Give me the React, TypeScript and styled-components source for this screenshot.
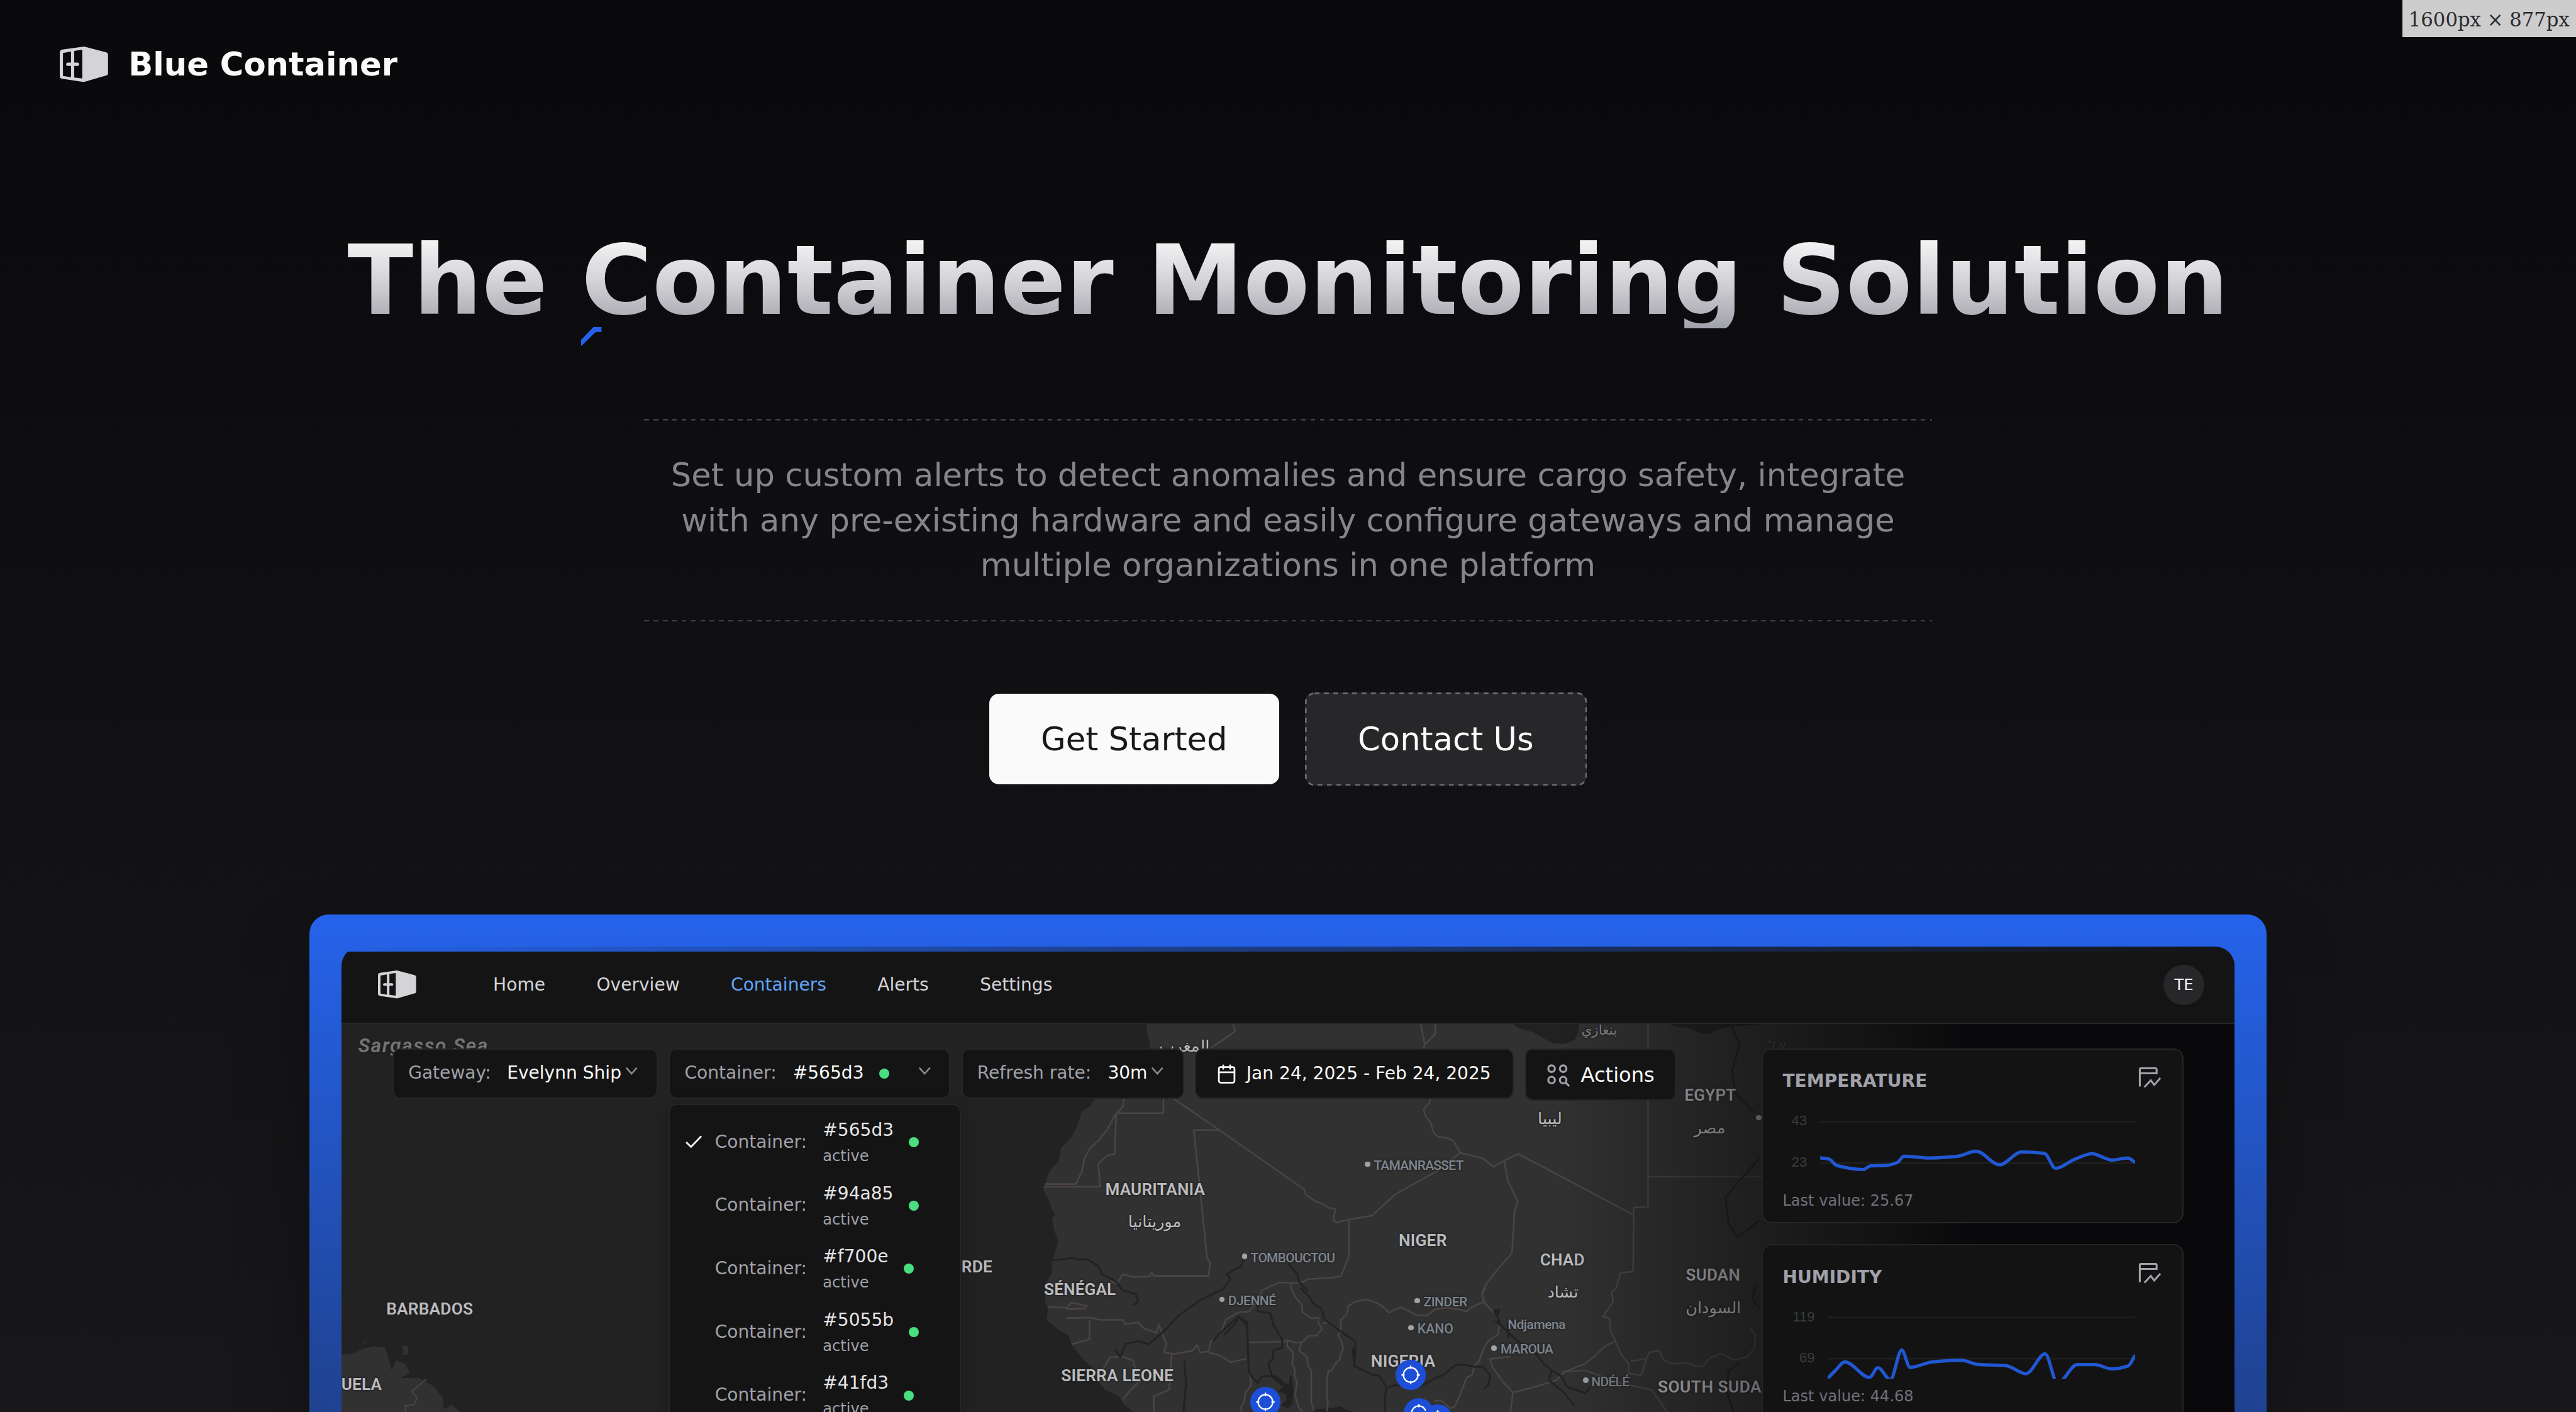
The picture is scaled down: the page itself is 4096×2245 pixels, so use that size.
import React from 'react';
import styled, { createGlobalStyle } from 'styled-components';
import { Calendar } from 'lucide-react';

/* One rem is one layout unit: the page is 1600 units wide. */
const GlobalStyle = createGlobalStyle`
  html { font-size: 2.56px; }
  body { margin: 0; background: #09090b; overflow: hidden; }
  * { box-sizing: border-box; }
`;

const Page = styled.div`
  position: relative;
  width: 1600rem;
  height: 877rem;
  overflow: hidden;
  display: flex;
  flex-direction: column;
  align-items: center;
  background: linear-gradient(180deg, #09090b, #18181b);
  color: #fafafa;
  font-family: 'DejaVu Sans', sans-serif;
`;

const Header = styled.header`
  align-self: stretch;
  height: 80rem;
  display: flex;
  align-items: center;
  gap: 12.8rem;
  padding-left: 37rem;
  flex-shrink: 0;
`;

const Brand = styled.span`
  font-size: 20rem;
  line-height: 28rem;
  font-weight: 700;
`;

const LogoSvg = styled.svg<{ $w: number }>`
  display: block;
  width: ${(p) => p.$w}rem;
  height: ${(p) => (p.$w * 22) / 30}rem;
  color: #d4d4d8;
  flex-shrink: 0;
`;

const SizeBadge = styled.div`
  position: absolute;
  top: 0;
  right: 0;
  width: 108rem;
  height: 23rem;
  padding: 1rem 4rem 0;
  display: flex;
  align-items: center;
  background: #cdcdcd;
  color: #2b2b2f;
  font-family: 'DejaVu Serif', serif;
  font-size: 12rem;
  white-space: nowrap;
`;

const Title = styled.h1`
  margin: 64rem 0 0;
  height: 60rem;
  font-size: 60rem;
  line-height: 60rem;
  font-weight: 700;
  white-space: nowrap;
  color: transparent;
  background: linear-gradient(180deg, #fafafa, #d4d4d8, #a1a1aa);
  background-clip: text;
  -webkit-background-clip: text;
  flex-shrink: 0;
`;

const Spark = styled.svg`
  position: absolute;
  left: 361rem;
  top: 203rem;
  width: 12.67rem;
  height: 11.9rem;
`;

const Lead = styled.p`
  margin: 56rem 0 0;
  width: 800rem;
  height: 126rem;
  padding-top: 0.6rem;
  display: flex;
  flex-direction: column;
  justify-content: center;
  align-items: center;
  background:
    repeating-linear-gradient(90deg, #3f3f46 0 3rem, transparent 3rem 5.83rem) 0 0 / 100% 1rem no-repeat,
    repeating-linear-gradient(90deg, #3f3f46 0 3rem, transparent 3rem 5.83rem) 0 100% / 100% 1rem no-repeat;
  font-size: 20rem;
  line-height: 28rem;
  color: #85858a;
  white-space: nowrap;
  flex-shrink: 0;
`;

const Actions = styled.div`
  margin-top: 44rem;
  height: 58rem;
  display: flex;
  align-items: center;
  gap: 16rem;
  flex-shrink: 0;
`;

const Button = styled.button<{ $primary?: boolean }>`
  position: relative;
  margin: 0;
  padding: 0.5rem 0 0;
  width: ${(p) => (p.$primary ? 180 : 175.2)}rem;
  height: ${(p) => (p.$primary ? 56 : 58)}rem;
  border: 0;
  border-radius: 6rem;
  background: ${(p) => (p.$primary ? '#fafafa' : '#27272a')};
  color: ${(p) => (p.$primary ? '#18181b' : '#fafafa')};
  font: 20rem/28rem 'DejaVu Sans', sans-serif;
`;

const DashedEdge = styled.svg`
  position: absolute;
  inset: 0;
  width: 100%;
  height: 100%;
  fill: none;
  stroke: #71717a;
`;

const Frame = styled.section`
  margin-top: 80rem;
  width: 1216rem;
  height: 710rem;
  padding: 20rem;
  border-radius: 12rem;
  background: linear-gradient(180deg, #2563eb, #18181b);
  box-shadow: 0 25rem 50rem -12rem rgba(0, 0, 0, 0.5);
  flex-shrink: 0;
`;

const AppShell = styled.div`
  height: 670rem;
  border-radius: 12rem;
  overflow: hidden;
  background: linear-gradient(90deg, transparent, #141414);
`;

const NavBar = styled.nav`
  height: 48rem;
  padding: 0 19rem 0 22.8rem;
  display: flex;
  align-items: center;
  border-bottom: 1rem solid #272727;
  background: linear-gradient(#141414, #141414) 0 3.2rem no-repeat;
`;

const NavLinks = styled.div`
  display: flex;
  gap: 31.8rem;
  margin-left: 47.8rem;
  flex: 1;
`;

const NavLink = styled.a<{ $active?: boolean }>`
  font-size: 10.97rem;
  line-height: 16rem;
  padding-top: 0.4rem;
  color: ${(p) => (p.$active ? '#60a5fa' : '#d4d4d8')};
`;

const Avatar = styled.div`
  width: 25.1rem;
  height: 25.1rem;
  border-radius: 50%;
  display: flex;
  align-items: center;
  justify-content: center;
  background: #27272a;
  color: #fafafa;
  font-size: 9.4rem;
`;

const MapArea = styled.div`
  position: relative;
  height: 622rem;
  overflow: hidden;
  background: #222;
`;

const MapCanvas = styled.svg`
  position: absolute;
  left: 0;
  top: 0;
  width: 1176rem;
  height: 241rem;
  fill: none;
  stroke-linejoin: round;
`;

const MapLabel = styled.span<{ $x: number; $y: number; $size: number; $tone?: string; $weight?: number; $start?: boolean; $space?: number }>`
  position: absolute;
  left: ${(p) => p.$x - 212}rem;
  top: ${(p) => p.$y - 636}rem;
  transform: translate(${(p) => (p.$start ? '0' : '-50%')}, -50%);
  font-family: Roboto, 'DejaVu Sans', sans-serif;
  font-size: ${(p) => p.$size}rem;
  font-weight: ${(p) => p.$weight ?? 600};
  letter-spacing: ${(p) => p.$space ?? 0.06}rem;
  line-height: 1.17;
  white-space: nowrap;
  color: ${(p) => p.$tone ?? '#bbbbbf'};
  text-shadow: 0 0 1rem #222, 0 0 1.5rem #222;
`;

const Sea = styled(MapLabel)`
  font-style: italic;
`;

const ArabicLabel = styled(MapLabel)`
  font-weight: 400;
  letter-spacing: 0;
`;

const City = styled(MapLabel)`
  color: #7f868f;
  font-weight: 500;
  letter-spacing: ${(p) => p.$space ?? -0.28}rem;
  margin-left: -0.4rem;
`;

const CityDot = styled.i<{ $x: number; $y: number }>`
  position: absolute;
  left: ${(p) => p.$x - 213.7}rem;
  top: ${(p) => p.$y - 637.7}rem;
  width: 3.4rem;
  height: 3.4rem;
  border-radius: 50%;
  background: #a3a3a3;
`;

const Pin = styled.svg<{ $x: number; $y: number }>`
  position: absolute;
  left: ${(p) => p.$x - 221.4}rem;
  top: ${(p) => p.$y - 645.4}rem;
  width: 18.8rem;
  height: 18.8rem;
`;

const Fade = styled.div`
  position: absolute;
  inset: 0;
  background: linear-gradient(90deg, rgba(9, 9, 11, 0) 756rem, rgba(9, 9, 11, 1) 1014rem);
`;

const Overlay = styled.div`
  position: relative;
  display: flex;
  justify-content: space-between;
  align-items: flex-start;
  padding: 15.1rem 31.7rem 0 31.8rem;
`;

const Toolbar = styled.div`
  display: flex;
  align-items: flex-start;
  gap: 6.9rem;
`;

const Control = styled.div<{ $w: number; $h?: number; $pl?: number }>`
  position: relative;
  width: ${(p) => p.$w}rem;
  height: ${(p) => p.$h ?? 31.2}rem;
  padding-left: ${(p) => p.$pl ?? 9}rem;
  display: flex;
  align-items: center;
  border: 1rem solid #262628;
  border-radius: 5rem;
  background: #141414;
  font-size: 10.97rem;
  line-height: 16rem;
  white-space: nowrap;
  color: #fafafa;
`;

const Muted = styled.span<{ $gap?: number }>`
  color: #a1a1aa;
  margin-right: ${(p) => p.$gap ?? 0}rem;
`;

const Dot = styled.i<{ $gap: number }>`
  width: 6.3rem;
  height: 6.3rem;
  margin-left: ${(p) => p.$gap}rem;
  border-radius: 50%;
  background: #4ade80;
  flex-shrink: 0;
`;

const ChevronSvg = styled.svg<{ $right: number }>`
  width: 8rem;
  height: 6rem;
  margin: -3.2rem ${(p) => p.$right}rem 0 auto;
  fill: none;
  stroke: #8b8b8f;
  stroke-width: 1;
`;

const CalendarIcon = styled(Calendar)`
  width: 12.9rem;
  height: 12.9rem;
  margin-right: 5.9rem;
  margin-top: 1rem;
`;

const GridIcon = styled.svg`
  width: 14.4rem;
  height: 14.2rem;
  margin: 1.2rem 6.6rem 0 0;
  fill: none;
  stroke: #a1a1aa;
`;

const DateText = styled.span`
  margin-top: 1rem;
`;

const ActionText = styled.span`
  font-size: 12.54rem;
  margin-top: 1.2rem;
`;

const Menu = styled.div`
  position: absolute;
  left: -1rem;
  top: 33.8rem;
  width: 181.6rem;
  padding-top: 3.4rem;
  height: 300rem;
  border: 1rem solid #262628;
  border-radius: 5rem;
  background: #141414;
  box-shadow: 0 3rem 9rem rgba(0, 0, 0, 0.25);
`;

const MenuItem = styled.div`
  height: 39.3rem;
  padding-left: 9.3rem;
  display: flex;
  align-items: center;
`;

const CheckSlot = styled.span`
  width: 18.8rem;
  display: flex;
`;

const CheckSvg = styled.svg`
  width: 11rem;
  height: 8rem;
  margin-top: -1rem;
  fill: none;
  stroke: #fafafa;
  stroke-width: 1.1;
`;

const IdColumn = styled.span`
  display: flex;
  flex-direction: column;
  padding-top: 1.4rem;
  color: #e4e4e7;
`;

const State = styled.span`
  font-size: 9.41rem;
  color: #a1a1aa;
`;

const CardColumn = styled.div`
  width: 262.2rem;
  display: flex;
  flex-direction: column;
  gap: 13rem;
`;

const Card = styled.article`
  position: relative;
  height: 108.7rem;
  padding: 11.8rem 12.1rem 0 12.3rem;
  border: 1rem solid #252527;
  border-radius: 6.3rem;
  background: #131313;
`;

const CardHead = styled.div`
  height: 16rem;
  display: flex;
  justify-content: space-between;
`;

const CardTitle = styled.h3`
  margin: 0;
  padding-top: 0.2rem;
  font-size: 10.97rem;
  line-height: 16rem;
  font-weight: 700;
  color: #a1a1aa;
`;

const ReportSvg = styled.svg`
  width: 13.8rem;
  height: 12.8rem;
  margin: -0.8rem 1rem 0 0;
  overflow: visible;
  fill: none;
  stroke: #a1a1aa;
  stroke-width: 1.2;
`;

const Chart = styled.div`
  margin-top: 6.9rem;
  display: flex;
  height: 53.2rem;
`;

const Axis = styled.div<{ $w: number }>`
  width: ${(p) => p.$w}rem;
  padding-top: 4.5rem;
  display: flex;
  flex-direction: column;
  gap: 15.7rem;
  text-align: right;
  font: 8.62rem/10rem 'Liberation Sans', Arial, sans-serif;
  color: #373d3f;
`;

const Plot = styled.svg<{ $w: number }>`
  width: ${(p) => p.$w}rem;
  height: 48.2rem;
  margin-left: 8rem;
  fill: none;
`;

const LastValue = styled.div`
  font-size: 9.41rem;
  line-height: 12rem;
  color: #71717a;
`;

const Logo = ({ width }: { width: number }) => (
  <LogoSvg $w={width} viewBox="33 36 270 198">
    <path
      fill="currentColor"
      fillRule="evenodd"
      d="M48 53L164 36.500Q168 36 172 37L290 68Q303 71 303 84V185Q303 196 290 199L172 233Q168 234 164 233.500L48 216Q33 214 33 200V70Q33 56 48 53ZM51 72L96 64V207L51 200ZM114 61L159 54V214.500L114 209Z"
    />
    <rect fill="currentColor" x="69" y="126" width="72" height="18" rx="9" />
  </LogoSvg>
);

const Chevron = ({ right }: { right: number }) => (
  <ChevronSvg $right={right} viewBox="0 0 8 6">
    <path d="M0.700 1L4 4.700L7.300 1" />
  </ChevronSvg>
);

const ReportIcon = () => (
  <ReportSvg viewBox="0 0 13.8 12.8">
    <path d="M0.550 11.900V1.300Q0.550 0.550 1.300 0.550H10.300Q11 0.550 11 1.300V3.700H0.550" />
    <path d="M3.400 12.300L7.400 8.100L9.500 10.900L13.300 6.600" />
  </ReportSvg>
);

type Point = [number, number];

/* Monotone cubic through the samples, so the line never overshoots a peak. */
function smooth(points: Point[]): string {
  const n = points.length;
  const slope: number[] = [];
  for (let i = 0; i < n - 1; i++) {
    slope.push((points[i + 1][1] - points[i][1]) / (points[i + 1][0] - points[i][0]));
  }
  const tangent = points.map((_, i) => {
    if (i === 0) return slope[0];
    if (i === n - 1) return slope[n - 2];
    const a = slope[i - 1];
    const b = slope[i];
    return a * b <= 0 ? 0 : (2 * a * b) / (a + b);
  });
  let d = `M${points[0][0]} ${points[0][1]}`;
  for (let i = 0; i < n - 1; i++) {
    const [x0, y0] = points[i];
    const [x1, y1] = points[i + 1];
    const h = (x1 - x0) / 3;
    d += `C${x0 + h} ${y0 + h * tangent[i]} ${x1 - h} ${y1 - h * tangent[i + 1]} ${x1} ${y1}`;
  }
  return d;
}

const temperature: Point[] = [
  [278, 551], [308, 556], [335, 582], [425, 598], [450, 583], [500, 582], [540, 570], [563, 545], [650, 552],
  [745, 545], [808, 525], [888, 579], [962, 528], [1040, 533], [1078, 593], [1145, 556], [1202, 535],
  [1270, 560], [1323, 552], [1349, 570],
];

const humidity: Point[] = [
  [304, 1431], [330, 1400], [363, 1365], [446, 1427], [475, 1388], [517, 1436], [556, 1318], [584, 1387],
  [660, 1365], [757, 1358], [815, 1375], [910, 1380], [978, 1412], [1043, 1333], [1085, 1450], [1152, 1376],
  [1212, 1376], [1270, 1393], [1325, 1381], [1349, 1338],
];

interface SensorProps {
  title: string;
  high: string;
  low: string;
  value: string;
  data: Point[];
  left: number;
  top: number;
  axis: number;
}

const Sensor = ({ title, high, low, value, data, left, top, axis }: SensorProps) => (
  <Card>
    <CardHead>
      <CardTitle>{title}</CardTitle>
      <ReportIcon />
    </CardHead>
    <Chart>
      <Axis $w={axis}>
        <span>{high}</span>
        <span>{low}</span>
      </Axis>
      <Plot
        $w={(1349 - left) * 0.18283}
        viewBox={`${left} ${top} ${1349 - left} 310`}
        preserveAspectRatio="none"
      >
        <path d={`M${left} ${top + 64}H1349M${left} ${top + 229}H1349`} stroke="#1f1f20" strokeWidth="2.6" vectorEffect="non-scaling-stroke" />
        <path d={smooth(data)} stroke="#2157d3" strokeWidth="5.2" vectorEffect="non-scaling-stroke" />
      </Plot>
    </Chart>
    <LastValue>Last value: {value}</LastValue>
  </Card>
);

const PinMark = ({ x, y }: { x: number; y: number }) => (
  <Pin $x={x} $y={y} viewBox="-85 -85 170 170">
    <circle r="85" fill="#1d4ed8" />
    <circle r="41" fill="none" stroke="#fff" strokeWidth="8" />
    <path d="M0 -52V-34M0 52V34M-52 0H-34M52 0H34" stroke="#fff" strokeWidth="8" />
  </Pin>
);

const WorldMap = () => (
  <MapCanvas viewBox="-1112 376 3688 1192" preserveAspectRatio="none">
    <g fill="#313131">
      <path d="M458 360L456 400L463 430L460 460L440 520L400 570L356 605L345 630L330 645L325 670L318 700L310 725L290 755L284 800L268 825L262 850L255 885L262 905L272 945L279 965L272 972L276 1010L284 1040L280 1070L272 1105L272 1140L258 1180L258 1225L264 1250L262 1285L280 1310L305 1335L310 1360L322 1385L335 1410L350 1430L355 1460L375 1500L402 1520L412 1545L440 1580H2576V360Z" />
      <g transform="translate(-1191.7 0) scale(.8666 1)">
        <path d="M90 1392L115 1390L140 1375L165 1366L190 1370L197 1400L205 1440L215 1410L235 1420L246 1445L225 1464L265 1463L300 1490L320 1525L322 1560L340 1545L368 1580H90ZM226 1365H242V1392H226L232 1380ZM140 1356L150 1350L146 1358Z" />
        <path d="M214 1072l5 4M218 1108l4 14M228 1110l2 8M232 1150l1 8M238 1182l7 12" stroke="#2c2c2c" strokeWidth="2" />
        <path d="M282 1468L262 1490L250 1505L262 1525L255 1545L235 1550L238 1580" stroke="#4b4444" strokeWidth="2.2" vectorEffect="non-scaling-stroke" fill="none" />
      </g>
    </g>
    <g fill="#212121">
      <path d="M1165 370L1180 388L1210 402L1235 425L1250 436L1270 438L1290 425L1298 400L1298 370Z" />
      <path d="M1466 370L1487 385L1511 388L1535 405L1551 408L1567 395L1591 385L1700 370Z" />
      <path d="M780 1568L785 1560L815 1556L835 1551L840 1558L860 1568Z" />
    </g>
    <g stroke="#4b4444" strokeWidth="2.6">
      {[
        'M625 376L629 398L605 425L590 440L575 460',
        'M990 376L998 435L994 470M1018 376L1019 405L998 440',
        'M1010 600L1006 620L996 637L1000 660L1010 680L1014 705L1023 722L1040 726L1054 735L1067 772L1020 830L940 900L895 965L850 977L826 986L820 980L824 945L810 940L800 930L785 920L766 900L764 885L598 702L500 596',
        'M598 702H548L560 880L574 1095L580 1110L577 1150H470L466 1140L462 1152L430 1153L410 1145L398 1175L385 1165',
        'M489 600V650H397L394 775L380 780L365 800L362 808L366 876H256M413 600L410 630L395 655L380 700L362 735L345 760L335 790L330 830L318 868H258',
        'M1067 772L1110 788L1132 815L1153 796L1180 775L1405 963M1153 796L1160 860L1170 890L1179 925L1173 950L1168 1080L1140 1130L1120 1170L1110 1200L1113 1230L1135 1268',
        'M1404 1137L1405 940L1433 938V376M1433 845H1800',
        'M1404 1137L1380 1140L1370 1190L1362 1200L1365 1230L1345 1275L1358 1280L1360 1320L1370 1350L1350 1365L1330 1395L1310 1420L1270 1445L1255 1470L1215 1490L1170 1508L1150 1475L1130 1430L1125 1405L1165 1398M1170 1508L1165 1568',
        'M1370 1352L1380 1390L1395 1420V1450L1420 1455L1430 1405L1400 1412M1430 1405L1435 1385L1455 1380L1463 1408L1480 1420L1511 1417L1527 1428H1540L1551 1405L1575 1388L1600 1408L1625 1400L1641 1370V1330L1632 1310',
        'M1265 1445L1310 1440L1380 1480L1440 1500L1470 1568',
        'M851 977L850 1090L843 1120L835 1150L820 1155L770 1160L755 1172L715 1170L680 1195',
        'M300 1280L345 1278L365 1285L410 1285L415 1298L440 1293L450 1310L475 1325L480 1300L495 1360L490 1385L510 1390L545 1380L555 1362L560 1385L577 1382L582 1350L600 1330L610 1285L635 1262L655 1260L675 1225L680 1195',
        'M264 1245L300 1248L310 1232L340 1242L335 1250L300 1252M345 1285V1345L310 1360',
        'M370 1440L385 1400L410 1398L430 1410L435 1440L445 1470L425 1500L410 1530M577 1385L600 1395L620 1415L650 1405M470 1568V1520L500 1500L505 1390',
      ].map((d) => (
        <path key={d} d={d} vectorEffect="non-scaling-stroke" />
      ))}
      <g transform="translate(606.3 1187.1) scale(.3485 .5496)">
        {[
          'M655 240V180L690 145L697 100L740 75L800 65L860 85L895 110L925 138L950 125L990 108L1030 125L1070 150L1135 155L1180 120L1240 110L1310 118L1355 132L1390 105L1455 78L1445 30L1465 0',
          'M378 -30V0L400 50L440 100V135L490 170L530 165V195L550 230L520 265L475 268L435 305H400L355 292L330 300L135 305M550 200L585 190',
          'M435 305L422 350L465 385L472 435L490 460V640L505 685',
          'M655 240L640 265L660 300L668 340L655 370L650 395L620 430L605 460L585 465L577 520V590L583 640L578 690',
          'M355 292V325L390 362L383 425L400 460L395 490L410 525L400 600L418 665L440 690',
          'M137 435L148 490L155 540L120 590L115 640L98 660L100 690',
          'M1540 210L1535 260L1480 295L1450 345L1428 410L1400 435L1390 485L1360 500L1335 560L1315 615L1290 665L1265 672L1215 628L1178 632',
        ].map((d) => (
          <path key={d} d={d} vectorEffect="non-scaling-stroke" />
        ))}
      </g>
    </g>
    <g stroke="#222" strokeWidth="3">
      {[
        'M272 1103L310 1095L325 1100L340 1098L362 1120L370 1145L395 1165L410 1195L435 1205L440 1230L430 1240',
        'M645 1100L640 1120L612 1145L620 1160L605 1190L560 1225L520 1270L490 1320L460 1360L440 1350L415 1360L405 1400L395 1375',
        'M732 1112L750 1145L754 1170L770 1195',
        'M530 1410L533 1480L528 1568M585 1350L610 1310L635 1275L650 1300',
        'M1135 1255L1145 1300L1165 1330L1190 1365L1215 1390L1230 1420L1245 1440L1240 1470L1270 1510L1290 1550M1245 1440L1265 1460L1275 1490L1310 1510L1320 1495M1160 1300V1340',
        'M1595 385L1612 440L1596 520L1604 590L1640 650M1650 790L1615 850L1584 910L1590 990L1608 1032L1650 980M1642 1180L1636 1220L1650 1250M1600 1568L1585 1500L1590 1440L1610 1420',
      ].map((d) => (
        <path key={d} d={d} vectorEffect="non-scaling-stroke" />
      ))}
      <g transform="translate(606.3 1187.1) scale(.3485 .5496)">
        {[
          'M430 0L480 50L500 85L545 115L565 175L650 240L738 300L730 435L830 485L870 490L910 555L900 620L903 690',
          'M910 560L950 545L1100 550L1190 500L1230 485L1290 435L1330 427L1400 440H1450L1490 490L1480 540L1455 565',
          'M190 80V130L260 140L280 210L325 285L330 335L280 345L275 395L250 425L270 490L215 495L190 530L155 495L140 460L135 305L130 190L80 160L65 200L0 265',
        ].map((d) => (
          <path key={d} d={d} vectorEffect="non-scaling-stroke" />
        ))}
        <g fill="#222" stroke="none">
          <path d="M250 488L300 490L340 530L365 540L370 490L380 490L390 560L385 650L360 675L320 655L352 625L345 590L300 580L335 555L290 520Z" />
          <path d="M716 335L740 330V375L728 400L716 375ZM1506 130L1520 115L1545 118L1540 150L1512 150ZM1500 180L1550 215L1545 190Z" />
        </g>
      </g>
    </g>
  </MapCanvas>
);

const dim = '#858589';

const menuItems = ['#565d3', '#94a85', '#f700e', '#5055b', '#41fd3'];

export default function App() {
  return (
    <>
      <GlobalStyle />
      <Page>
        <Header>
          <Logo width={30} />
          <Brand>Blue Container</Brand>
        </Header>
        <Title>The Container Monitoring Solution</Title>
        <Spark viewBox="69 57 114 107" preserveAspectRatio="none">
          <path fill="#2563eb" d="M69 128L138 57H183V84H151L69 164Z" />
        </Spark>
        <Lead>
          <span>Set up custom alerts to detect anomalies and ensure cargo safety, integrate</span>
          <span>with any pre-existing hardware and easily configure gateways and manage</span>
          <span>multiple organizations in one platform</span>
        </Lead>
        <Actions>
          <Button $primary>Get Started</Button>
          <Button>
            <DashedEdge viewBox="0 0 175.2 58">
              <rect x="0.5" y="0.5" width="174.2" height="57" rx="5.5" strokeDasharray="3 2.83" />
            </DashedEdge>
            Contact Us
          </Button>
        </Actions>

        <Frame>
          <AppShell>
            <NavBar>
              <Logo width={23.7} />
              <NavLinks>
                <NavLink>Home</NavLink>
                <NavLink>Overview</NavLink>
                <NavLink $active>Containers</NavLink>
                <NavLink>Alerts</NavLink>
                <NavLink>Settings</NavLink>
              </NavLinks>
              <Avatar>TE</Avatar>
            </NavBar>

            <MapArea>
              <WorldMap />
              <Sea $x={263} $y={649.6} $size={12.2} $tone="#747474" $weight={600} $space={0.7}>Sargasso Sea</Sea>
              <MapLabel $x={266.9} $y={813.1} $size={10.3}>BARBADOS</MapLabel>
              <MapLabel $x={212} $y={859.8} $size={10.2} $start>UELA</MapLabel>
              <MapLabel $x={597.2} $y={786.6} $size={10.3} $start>RDE</MapLabel>
              <ArabicLabel $x={735.7} $y={650} $size={10}>المغرب</ArabicLabel>
              <MapLabel $x={717.5} $y={738.7} $size={10.2}>MAURITANIA</MapLabel>
              <ArabicLabel $x={717.2} $y={759} $size={10}>موريتانيا</ArabicLabel>
              <MapLabel $x={670.8} $y={801} $size={10.2}>SÉNÉGAL</MapLabel>
              <MapLabel $x={694} $y={854.2} $size={10.3}>SIERRA LEONE</MapLabel>
              <MapLabel $x={883.7} $y={770.5} $size={10.3}>NIGER</MapLabel>
              <MapLabel $x={970.4} $y={782.4} $size={10.2}>CHAD</MapLabel>
              <ArabicLabel $x={970.7} $y={802.6} $size={10}>تشاد</ArabicLabel>
              <ArabicLabel $x={962.7} $y={694.8} $size={10}>ليبيا</ArabicLabel>
              <MapLabel $x={871.5} $y={845.3} $size={10.3}>NIGERIA</MapLabel>
              <MapLabel $x={1062.3} $y={680} $size={10.2}>EGYPT</MapLabel>
              <ArabicLabel $x={1061.9} $y={701} $size={10}>مصر</ArabicLabel>
              <MapLabel $x={1064} $y={791.9} $size={10.2}>SUDAN</MapLabel>
              <ArabicLabel $x={1064.2} $y={812.7} $size={10}>السودان</ArabicLabel>
              <MapLabel $x={1029.7} $y={861.2} $size={10.3} $space={0.16} $start>SOUTH SUDAN</MapLabel>
              <ArabicLabel $x={1104} $y={649} $size={9.5} $tone="#4a4a4a">אל</ArabicLabel>
              <ArabicLabel $x={993.3} $y={639.8} $size={8.4} $tone={dim}>بنغازي</ArabicLabel>
              <CityDot $x={849.5} $y={723.1} />
              <City $x={853.6} $y={723.8} $size={8.2} $start>TAMANRASSET</City>
              <CityDot $x={773} $y={780.4} />
              <City $x={777.2} $y={781.2} $size={8.2} $start>TOMBOUCTOU</City>
              <CityDot $x={759} $y={807.1} />
              <City $x={763.2} $y={808} $size={8.2} $space={-0.2} $start>DJENNÉ</City>
              <CityDot $x={880.4} $y={807.9} />
              <City $x={884.6} $y={808.7} $size={8.2} $space={-0.2} $start>ZINDER</City>
              <CityDot $x={876.3} $y={824.6} />
              <City $x={880.8} $y={825.4} $size={8.3} $space={0} $start>KANO</City>
              <City $x={936.8} $y={822.6} $size={8.2} $space={-0.2} $start>Ndjamena</City>
              <CityDot $x={928} $y={837.4} />
              <City $x={932.4} $y={838} $size={8.2} $start>MAROUA</City>
              <CityDot $x={985} $y={857.2} />
              <City $x={988.8} $y={858.2} $size={8.2} $start>NDÉLÉ</City>
              <CityDot $x={1092.3} $y={694.2} />
              <PinMark x={785.8} y={870.6} />
              <PinMark x={876.3} y={854} />
              <PinMark x={881.1} y={877.7} />
              <PinMark x={892.9} y={881.7} />
              <Fade />

              <Overlay>
                <Toolbar>
                  <Control $w={164.7}>
                    <Muted $gap={10}>Gateway:</Muted>
                    Evelynn Ship
                    <Chevron right={11.5} />
                  </Control>
                  <Control $w={174.9}>
                    <Muted $gap={10.2}>Container:</Muted>
                    <span>#565d3</span>
                    <Dot $gap={9.6} />
                    <Chevron right={11.2} />
                    <Menu>
                      {menuItems.map((id, i) => (
                        <MenuItem key={id}>
                          <CheckSlot>
                            {i === 0 && (
                              <CheckSvg viewBox="0 0 11 8">
                                <path d="M0.800 4.300L3.800 7.200L10.200 0.600" />
                              </CheckSvg>
                            )}
                          </CheckSlot>
                          <Muted $gap={9.9}>Container:</Muted>
                          <IdColumn>
                            {id}
                            <State>active</State>
                          </IdColumn>
                          <Dot $gap={9.4} />
                        </MenuItem>
                      ))}
                    </Menu>
                  </Control>
                  <Control $w={138.3}>
                    <Muted $gap={10.2}>Refresh rate:</Muted>
                    30m
                    <Chevron right={11.8} />
                  </Control>
                  <Control $w={197.9} $pl={12.2}>
                    <CalendarIcon />
                    <DateText>Jan 24, 2025 - Feb 24, 2025</DateText>
                  </Control>
                  <Control $w={93.9} $h={32.4} $pl={12.9}>
                    <GridIcon viewBox="96 125 130 128">
                      <g strokeWidth="11">
                        <circle cx="121" cy="150" r="18.500" />
                        <circle cx="186" cy="150" r="18.500" />
                        <circle cx="121" cy="214" r="18.500" />
                        <circle cx="186" cy="214" r="18.500" />
                        <path d="M199 227L220 248" />
                      </g>
                    </GridIcon>
                    <ActionText>Actions</ActionText>
                  </Control>
                </Toolbar>

                <CardColumn>
                  <Sensor title="TEMPERATURE" high="43" low="23" value="25.67" data={temperature} left={278} top={343} axis={15.2} />
                  <Sensor title="HUMIDITY" high="119" low="69" value="44.68" data={humidity} left={304} top={1123} axis={20} />
                </CardColumn>
              </Overlay>
            </MapArea>
          </AppShell>
        </Frame>

        <SizeBadge>1600px × 877px</SizeBadge>
      </Page>
    </>
  );
}
